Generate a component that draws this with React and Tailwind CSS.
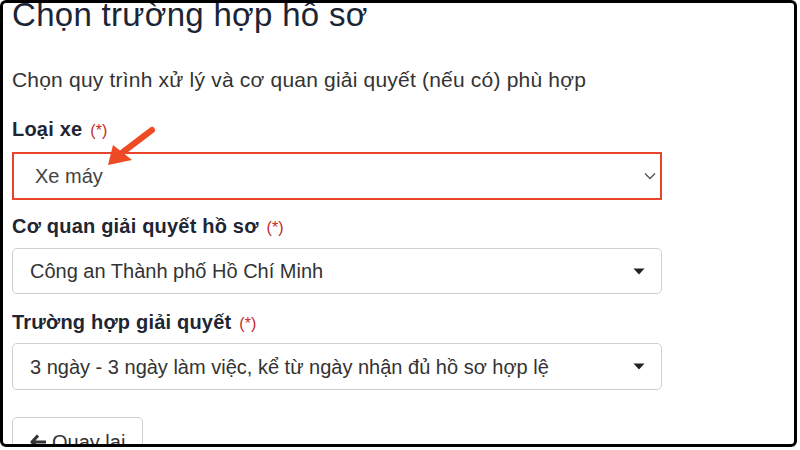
import React from "react";

const font = { fontFamily: '"Liberation Sans", Arial, sans-serif' };

function Caret() {
  return (
    <svg width="12" height="7" viewBox="0 0 12 7" className="shrink-0">
      <path d="M0.5 0.5 L11.5 0.5 L6 6.5 Z" fill="#222" />
    </svg>
  );
}

function Chevron() {
  return (
    <svg width="12" height="8" viewBox="0 0 12 8" className="shrink-0">
      <path d="M1 1.5 L6 6.5 L11 1.5" fill="none" stroke="#555" strokeWidth="1.4" />
    </svg>
  );
}

function Label({ text }) {
  return (
    <div className="flex items-baseline gap-[8px] text-[20px] leading-[24px] tracking-[0.2px] font-bold text-[#1e2633]">
      {text}
      <span className="text-[16px] leading-[20px] font-normal tracking-normal text-[#c62828]">(*)</span>
    </div>
  );
}

function SelectBox({ value, h }) {
  return (
    <div className={`w-[650px] ${h} border border-[#cfcfcf] rounded-[5px] flex items-center justify-between pl-[17px] pr-[16px] text-[20px] text-[#333]`}>
      <span>{value}</span>
      <Caret />
    </div>
  );
}

export default function App() {
  return (
    <div className="w-[800px] h-[450px] bg-white relative" style={font}>
      <div className="w-[797px] h-[447px] border-[3px] border-black rounded-[6px] overflow-hidden bg-white">
        <div className="pl-[9px] flex flex-col">
          <h1 className="text-[33px] leading-[40px] font-normal text-[#1c2535] -mt-[8px] tracking-[0.3px]">
            Chọn trường hợp hồ sơ
          </h1>
          <p className="mt-[32px] text-[21px] leading-[26px] tracking-[0.2px] text-[#333]">
            Chọn quy trình xử lý và cơ quan giải quyết (nếu có) phù hợp
          </p>

          <div className="mt-[24px]">
            <Label text="Loại xe" />
          </div>
          <div className="mt-[11px] w-[650px] h-[48px] border-2 border-[#e8452c] flex items-center justify-between pl-[21px] pr-[4px] text-[20px] text-[#444]">
            <span>Xe máy</span>
            <Chevron />
          </div>

          <div className="mt-[14px]">
            <Label text="Cơ quan giải quyết hồ sơ" />
          </div>
          <div className="mt-[10px]">
            <SelectBox value="Công an Thành phố Hồ Chí Minh" h="h-[46px]" />
          </div>

          <div className="mt-[16px]">
            <Label text="Trường hợp giải quyết" />
          </div>
          <div className="mt-[9px]">
            <SelectBox value="3 ngày - 3 ngày làm việc, kể từ ngày nhận đủ hồ sơ hợp lệ" h="h-[47px]" />
          </div>

          <div className="mt-[27px]">
            <button className="w-[131px] h-[44px] border border-[#cfcfcf] rounded-[5px] flex items-start gap-[5px] pl-[17px] pt-[9px] text-[20px] text-[#333]">
              <svg width="17" height="16" viewBox="0 0 17 16" className="mt-[7px]">
                <path d="M8 1.5 L2 8 L8 14.5 M2.5 8 L16 8" fill="none" stroke="#333" strokeWidth="3.2" strokeLinejoin="round" />
              </svg>
              <span>Quay lại</span>
            </button>
          </div>
        </div>
      </div>

      <svg className="absolute left-0 top-0 pointer-events-none" width="800" height="450">
        <line x1="152" y1="130" x2="123" y2="152" stroke="#ee4a24" strokeWidth="6" strokeLinecap="round" />
        <path d="M108 165 L113 145 L132 160 Z" fill="#ee4a24" />
      </svg>
    </div>
  );
}
